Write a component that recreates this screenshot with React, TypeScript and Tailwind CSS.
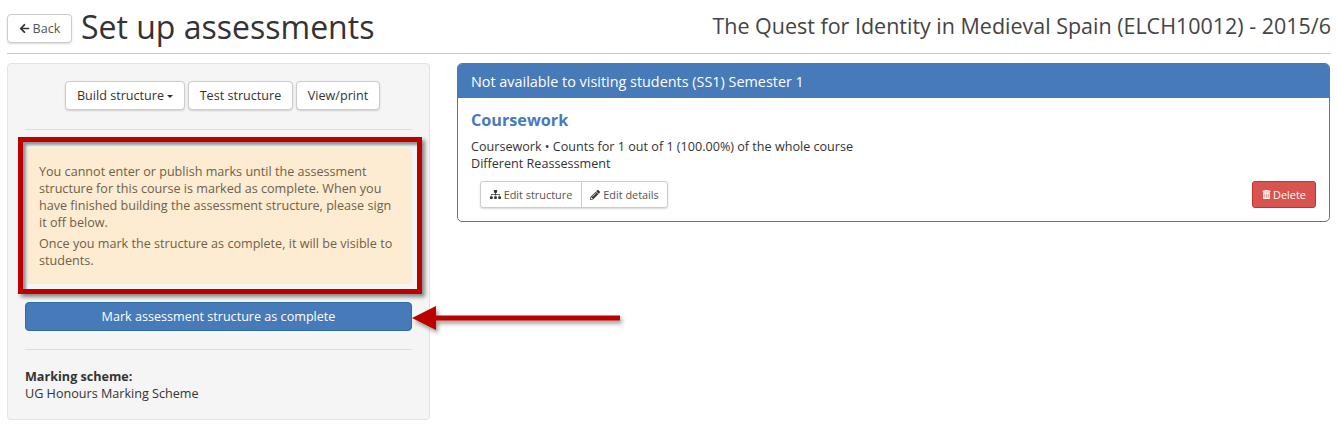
import { FaArrowLeft, FaPencilAlt, FaSitemap, FaTrashAlt } from "react-icons/fa";

const btn = "h-[29px] rounded-[4px] border border-[#cccccc] bg-white text-[12.6px] text-[#333333] shadow-[0_1px_2px_rgba(0,0,0,0.15)]";

export default function App() {
  return (
    <div className="relative h-[426px] w-[1338px] overflow-hidden bg-white font-['Open_Sans',sans-serif] text-[12.6px] leading-[17px] text-[#333333]">
      <header className="mx-[7px] flex h-[54px] items-start justify-between border-b border-[#cccccc]">
        <div className="flex items-start gap-[9px]">
          <button className={`mt-[14px] flex w-[65px] items-center justify-center gap-[3px] text-[#555555] ${btn}`}>
            <FaArrowLeft className="text-[11px] text-[#333333]" />
            Back
          </button>
          <h1 className="mt-[8px] text-[32px] leading-[38px] text-[#333333]">Set up assessments</h1>
        </div>
        <div className="mt-[12px] text-[21.47px] leading-[27px] text-[#444444]">
          The Quest for Identity in Medieval Spain (ELCH10012) - 2015/6
        </div>
      </header>

      <main className="mx-[7px] mt-[9px] flex items-start gap-[27px]">
        <aside className="h-[357px] w-[423px] rounded-[4px] border border-[#e3e3e3] bg-[#f5f5f5] px-[17px] pt-[17px]">
          <div className="ml-[8px] flex justify-center gap-[3px]">
            <button className={`flex w-[120px] items-center justify-center gap-[3px] ${btn}`}>
              Build structure
              <span className="mt-[2px] border-x-[3px] border-t-[3px] border-x-transparent border-t-[#333333]" />
            </button>
            <button className={`w-[105px] ${btn}`}>Test structure</button>
            <button className={`w-[84px] ${btn}`}>View/print</button>
          </div>
          <hr className="mt-[19px] border-[#dddddd]" />
          <div className="mt-[18px] ml-[2px] h-[136px] rounded-[4px] border border-[#faebcc] bg-[#feecd2] px-[11px] pt-[14px] text-[#6f6048]">
            <p>
              You cannot enter or publish marks until the assessment structure for this course is marked as complete. When you have
              finished building the assessment structure, please sign it off below.
            </p>
            <p className="mt-[4px]">Once you mark the structure as complete, it will be visible to students.</p>
          </div>
          <button className="mt-[18px] h-[29px] w-full rounded-[4px] border border-[#2e6da4] bg-[#467ab9] text-[12.6px] text-white">
            Mark assessment structure as complete
          </button>
          <hr className="mt-[18px] border-[#dddddd]" />
          <div className="mt-[18px]">
            <div className="font-bold">Marking scheme:</div>
            <div>UG Honours Marking Scheme</div>
          </div>
        </aside>

        <section className="h-[159px] w-[873px] overflow-hidden rounded-[5px] border border-[#467ab9] bg-white">
          <div className="flex h-[34px] items-center bg-[#467ab9] px-[13px] text-[14.4px] text-white">
            Not available to visiting students (SS1) Semester 1
          </div>
          <div className="px-[13px] pt-[10px]">
            <h2 className="text-[16.2px] leading-[24px] font-bold text-[#467ab9]">Coursework</h2>
            <div className="mt-[6px]">Coursework • Counts for 1 out of 1 (100.00%) of the whole course</div>
            <div>Different Reassessment</div>
            <div className="mt-[9px] flex items-center justify-between">
              <div className="ml-[9px] flex h-[27px] rounded-[3px] border border-[#cccccc] bg-white text-[10.9px] text-[#555555] shadow-[0_1px_2px_rgba(0,0,0,0.15)]">
                <span className="flex w-[101px] items-center justify-center gap-[3px] border-r border-[#cccccc]">
                  <FaSitemap className="text-[11px] text-[#333333]" />
                  Edit structure
                </span>
                <span className="flex w-[85px] items-center justify-center gap-[3px]">
                  <FaPencilAlt className="text-[10px] text-[#333333]" />
                  Edit details
                </span>
              </div>
              <button className="flex h-[27px] w-[64px] items-center justify-center gap-[2px] rounded-[3px] border border-[#c9302c] bg-[#d9534f] text-[10.9px] text-white">
                <FaTrashAlt className="text-[9px]" />
                Delete
              </button>
            </div>
          </div>
        </section>
      </main>

      {/* annotations drawn over the screenshot */}
      <div className="absolute top-[137px] left-[18px] h-[157px] w-[404px] border-[5px] border-[#bb0000] shadow-[3px_3px_4px_rgba(0,0,0,0.45),inset_3px_3px_3px_rgba(0,0,0,0.4)]" />
      <svg className="absolute top-[300px] left-[405px]" width="225" height="40" viewBox="0 0 225 40">
        <defs>
          <filter id="arrow-shadow" x="-10%" y="-30%" width="120%" height="170%">
            <feDropShadow dx="2" dy="3" stdDeviation="2" floodColor="#000" floodOpacity="0.4" />
          </filter>
        </defs>
        <path d="M7 18 L31 6 V15.5 H215 V20.5 H31 V30 Z" fill="#bb0000" filter="url(#arrow-shadow)" />
      </svg>
    </div>
  );
}
